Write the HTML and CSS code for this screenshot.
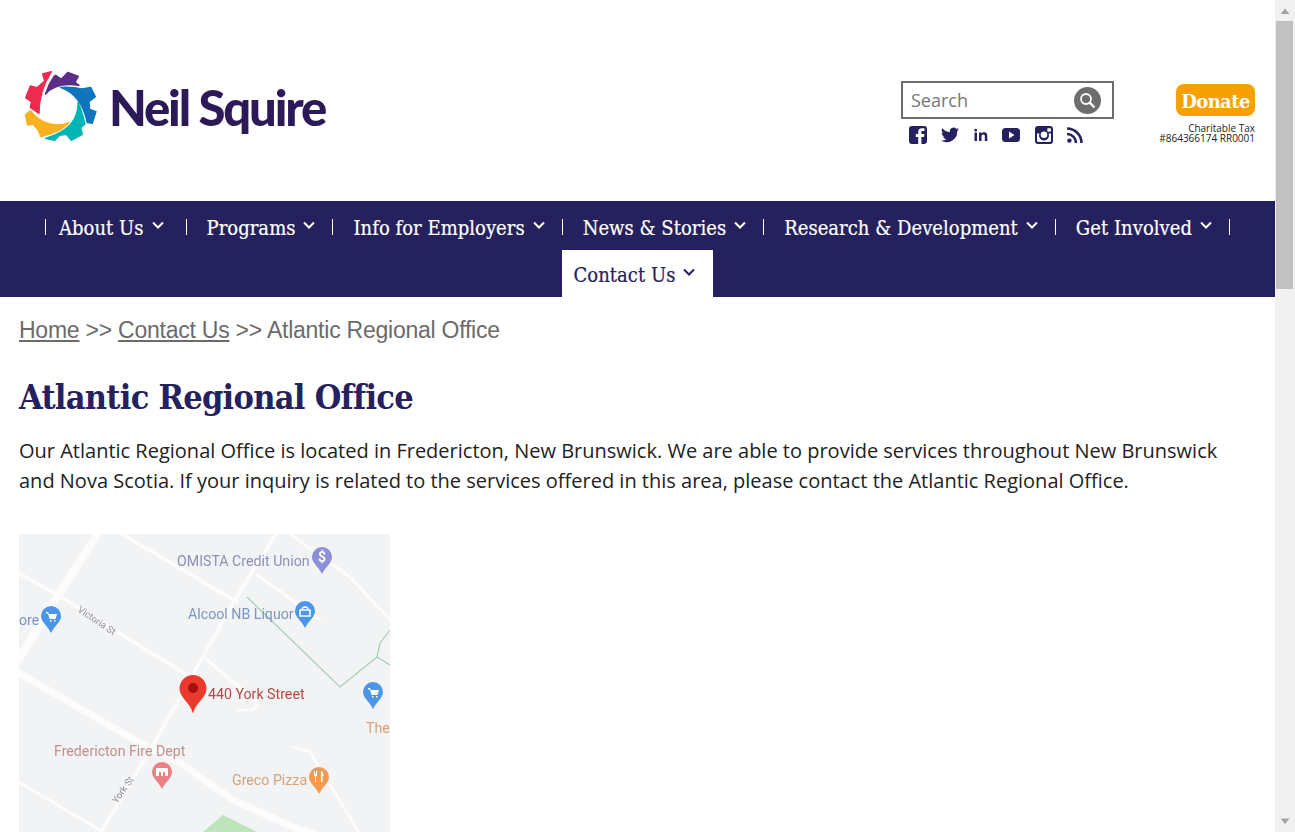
FILE: index.html
```html
<!DOCTYPE html>
<html lang="en">
<head>
<meta charset="utf-8">
<title>Atlantic Regional Office - Neil Squire</title>
<link rel="stylesheet" href="styles.css">
</head>
<body>
<div class="page">
<header class="top">
  <a class="logo" href="#">
    <svg class="gear" width="75" height="73" viewBox="70 60 225 219" stroke-width="4" stroke-linejoin="round">
      <path fill="#f0294f" stroke="#f0294f" d="M155 65 L129 72 L135 93 L112 113 L92 108 L78 143 L95 155 L92 172 L118 190 C118 140 130 105 155 65Z"/>
      <path fill="#5a2d86" stroke="#5a2d86" d="M137 133 C144 110 152 95 164 78 L168 76 L185 87 L205 67 L236 79 L226 97 L238 106 C200 100 160 105 137 133Z"/>
      <path fill="#0f75bc" stroke="#0f75bc" d="M182 112 C205 110 225 112 248 117 L273 112 L287 140 L268 155 L270 178 L289 185 L278 220 L263 218 C255 180 235 130 182 112Z"/>
      <path fill="#00b5b5" stroke="#00b5b5" d="M235 157 C246 180 252 205 256 222 L243 233 L248 253 L215 271 L200 253 L180 256 L165 271 L137 265 C190 250 238 220 235 157Z"/>
      <path fill="#f9b11f" stroke="#f9b11f" d="M208 217 C170 235 120 220 92 182 L77 195 L84 225 L100 222 L115 240 L124 260 C160 250 190 240 208 217Z"/>
    </svg>
    <span class="wordmark">Neil Squire</span>
  </a>
  <div class="tools">
    <form class="search">
      <span class="search-label">Search</span>
      <span class="search-btn">
        <svg width="17" height="17" viewBox="0 0 17 17" fill="none" stroke="#fff" stroke-width="1.8"><circle cx="7" cy="7" r="5"/><path d="M10.7 10.7 L15.5 15.5" stroke-width="2.4"/></svg>
      </span>
    </form>
    <div class="social">
      <svg width="18" height="18" viewBox="0 0 18 18"><path fill="#252160" d="M3 0 H15 a3 3 0 0 1 3 3 V15 a3 3 0 0 1 -3 3 H12.4 V11 H15 L15.400 8 H12.400 V6.300 C12.400 5.400 12.800 5 13.700 5 H15.500 V2.300 H13 C10.500 2.300 9.200 3.800 9.200 6 V8 H6.800 V11 H9.200 V18 H3 a3 3 0 0 1 -3 -3 V3 a3 3 0 0 1 3 -3Z"/></svg>
      <svg width="18" height="16" viewBox="0 0 18 15"><path fill="#252160" d="M18 1.800 a7.300 7.300 0 0 1 -2.100 .6 A3.700 3.700 0 0 0 17.500 .4 a7.400 7.400 0 0 1 -2.300 .9 A3.700 3.700 0 0 0 8.900 4.700 A10.500 10.500 0 0 1 1.300 .8 A3.700 3.700 0 0 0 2.400 5.700 A3.600 3.600 0 0 1 .7 5.300 A3.700 3.700 0 0 0 3.700 8.900 A3.700 3.700 0 0 1 2 9 A3.700 3.700 0 0 0 5.500 11.500 A7.400 7.400 0 0 1 0 13 A10.500 10.500 0 0 0 16.200 3.700 A7.500 7.500 0 0 0 18 1.800Z"/></svg>
      <svg width="14" height="14" viewBox="0 0 14 14"><path fill="#252160" d="M.5 4.500 H3 V13 H.5Z M1.700 .8 a1.400 1.400 0 1 1 0 2.800 a1.400 1.400 0 0 1 0 -2.800Z M5 4.500 H7.400 V5.700 C7.900 4.900 8.900 4.300 10.100 4.300 C12.500 4.300 13.300 5.800 13.300 8 V13 H10.800 V8.500 C10.800 7.400 10.500 6.500 9.400 6.500 C8.200 6.500 7.500 7.300 7.500 8.600 V13 H5Z"/></svg>
      <svg width="18" height="14" viewBox="0 0 18 14"><path fill="#252160" fill-rule="evenodd" d="M3.500 0 H14.500 A3.500 3.500 0 0 1 18 3.500 V10.500 A3.500 3.500 0 0 1 14.500 14 H3.500 A3.500 3.500 0 0 1 0 10.500 V3.500 A3.500 3.500 0 0 1 3.500 0Z M7 3.500 V10.500 L12.500 7Z"/></svg>
      <svg width="18" height="18" viewBox="0 0 18 18"><path fill="#252160" fill-rule="evenodd" d="M3 0 H15 a3 3 0 0 1 3 3 V15 a3 3 0 0 1 -3 3 H3 a3 3 0 0 1 -3 -3 V3 a3 3 0 0 1 3 -3Z M2 7.500 V14.500 a1.500 1.500 0 0 0 1.500 1.500 H14.500 a1.500 1.500 0 0 0 1.500 -1.500 V7.500 H13.600 a5 5 0 1 1 -9.200 0Z M9 5.500 a3.300 3.300 0 1 0 0 6.600 a3.300 3.300 0 0 0 0 -6.600Z M13 2.200 a.7 .7 0 0 0 -.7 .7 V5 a.7 .7 0 0 0 .7 .7 H15.200 a.7 .7 0 0 0 .7 -.7 V2.900 a.7 .7 0 0 0 -.7 -.7Z"/></svg>
      <svg width="16" height="16" viewBox="0 0 16 16" fill="none" stroke="#252160" stroke-width="2.500"><circle cx="2.400" cy="13.600" r="2.200" fill="#252160" stroke="none"/><path d="M0 7 a9 9 0 0 1 9 9"/><path d="M0 1.500 a14.500 14.500 0 0 1 14.500 14.500"/></svg>
    </div>
  </div>
  <div class="give">
    <a class="donate" href="#">Donate</a>
    <p class="tax">Charitable Tax<br>#864366174 RR0001</p>
  </div>
</header>

<nav class="nav">
  <ul class="nav-list">
    <li class="nav-item first"><a href="#">About Us<svg class="chev" width="12" height="8" viewBox="0 0 12 8"><path d="M1 1.500 L6 6.500 L11 1.500"/></svg></a></li>
    <li class="nav-item"><a href="#">Programs<svg class="chev" width="12" height="8" viewBox="0 0 12 8"><path d="M1 1.500 L6 6.500 L11 1.500"/></svg></a></li>
    <li class="nav-item"><a href="#">Info for Employers<svg class="chev" width="12" height="8" viewBox="0 0 12 8"><path d="M1 1.500 L6 6.500 L11 1.500"/></svg></a></li>
    <li class="nav-item"><a href="#">News &amp; Stories<svg class="chev" width="12" height="8" viewBox="0 0 12 8"><path d="M1 1.500 L6 6.500 L11 1.500"/></svg></a></li>
    <li class="nav-item"><a href="#">Research &amp; Development<svg class="chev" width="12" height="8" viewBox="0 0 12 8"><path d="M1 1.500 L6 6.500 L11 1.500"/></svg></a></li>
    <li class="nav-item"><a href="#">Get Involved<svg class="chev" width="12" height="8" viewBox="0 0 12 8"><path d="M1 1.500 L6 6.500 L11 1.500"/></svg></a></li>
    <li class="nav-item current"><a href="#">Contact Us<svg class="chev" width="12" height="8" viewBox="0 0 12 8"><path d="M1 1.500 L6 6.500 L11 1.500"/></svg></a></li>
  </ul>
</nav>

<main class="main">
  <p class="crumbs"><a href="#">Home</a> &gt;&gt; <a href="#">Contact Us</a> &gt;&gt; Atlantic Regional Office</p>
  <h1 class="title">Atlantic Regional Office</h1>
  <p class="intro">Our Atlantic Regional Office is located in Fredericton, New Brunswick. We are able to provide services throughout New Brunswick and Nova Scotia. If your inquiry is related to the services offered in this area, please contact the Atlantic Regional Office.</p>
  <svg class="map" width="371" height="298" viewBox="19 534 371 298" font-family="Roboto, Arial, sans-serif">
    <rect x="19" y="534" width="371" height="298" fill="#f2f3f5"/>
    <g fill="none" stroke="#fcfcfd" stroke-linecap="round" stroke-linejoin="round">
      <path stroke-width="8" d="M100 530 L58 595 L15 665"/>
      <path stroke-width="7" d="M15 671 L140 743 L180 763 L233 800 L293 827 L320 836"/>
      <path stroke-width="3.500" d="M15 571 L58 595 L187 675"/>
      <path stroke-width="3.500" d="M122 534 L237 602"/>
      <path stroke-width="3" d="M257 575 L320 620"/>
      <path stroke-width="3.500" d="M277 532 L233 603 L160 733 L100 834"/>
      <path stroke-width="3" d="M205 658 L258 703 L253 710 L238 710"/>
      <path stroke-width="3" d="M290 534 L350 577 L392 622"/>
      <path stroke-width="3" d="M17 781 L100 830"/>
      <path stroke-width="3" d="M293 747 L310 752 L360 834"/>
    </g>
    <path fill="none" stroke="#a9cdb0" stroke-width="1.200" d="M247 597 L340 687 L377 657 L390 665 M377 657 L380 643 L390 630"/>
    <path fill="#bfe3bd" d="M203 832 L223 815 L257 832Z"/>
    <g font-size="14.200">
      <text x="177" y="566" fill="#8b90b8">OMISTA Credit Union</text>
      <text x="188" y="619" fill="#7a97c0">Alcool NB Liquor</text>
      <text x="19" y="625" fill="#7a97c0">ore</text>
      <text x="208" y="699" fill="#b84a44">440 York Street</text>
      <text x="54" y="756" fill="#c78d8e">Fredericton Fire Dept</text>
      <text x="232" y="785" fill="#d6a27a">Greco Pizza</text>
      <text x="366" y="733" fill="#d6a27a">The</text>
    </g>
    <text font-size="9.500" fill="#8d9196" transform="translate(77 611) rotate(34)">Victoria St</text>
    <text font-size="9.500" fill="#8d9196" transform="translate(117 804) rotate(-55)">York St</text>
    <path fill="#8d8fd8" d="M322 547 a10 10 0 0 1 10 10 c0 6 -6 9 -10 17 c-4 -8 -10 -11 -10 -17 a10 10 0 0 1 10 -10Z"/>
    <path fill="#4b96e6" d="M305 601 a10 10 0 0 1 10 10 c0 6 -6 9 -10 17 c-4 -8 -10 -11 -10 -17 a10 10 0 0 1 10 -10Z"/>
    <path fill="#4b96e6" d="M51 606 a10 10 0 0 1 10 10 c0 6 -6 9 -10 17 c-4 -8 -10 -11 -10 -17 a10 10 0 0 1 10 -10Z"/>
    <path fill="#4b96e6" d="M373 682 a10 10 0 0 1 10 10 c0 6 -6 9 -10 17 c-4 -8 -10 -11 -10 -17 a10 10 0 0 1 10 -10Z"/>
    <path fill="#ea7f84" d="M162 762 a10 10 0 0 1 10 10 c0 6 -6 9 -10 17 c-4 -8 -10 -11 -10 -17 a10 10 0 0 1 10 -10Z"/>
    <path fill="#f29a52" d="M319 767 a10 10 0 0 1 10 10 c0 6 -6 9 -10 17 c-4 -8 -10 -11 -10 -17 a10 10 0 0 1 10 -10Z"/>
    <text x="322" y="562" font-size="14" font-weight="700" fill="#fff" text-anchor="middle">$</text>
    <path fill="none" stroke="#fff" stroke-width="1.500" d="M300 610 H310 V616 H300Z M302 610 a3 3 0 0 1 6 0"/>
    <path fill="#fff" d="M46 612 H48 L49 614 H57 L55.500 619 H49.500 L48 613.500 H46Z M50 620 h1.500 v1.500 h-1.500Z M54 620 h1.500 v1.500 h-1.500Z"/>
    <path fill="#fff" d="M368 688 H370 L371 690 H379 L377.500 695 H371.500 L370 689.500 H368Z M372 696 h1.500 v1.500 h-1.500Z M376 696 h1.500 v1.500 h-1.500Z"/>
    <path fill="#fff" d="M156 768 H168 V776 H165 V772 H163 V776 H161 V772 H159 V776 H156Z"/>
    <path fill="#fff" d="M314 771 h1 v3 h1 v-3 h1 v5 h-1 v6 h-1 v-6 h-1Z M321 771 c2 0 2.500 3 2.500 5 h-1 v6 h-1.500Z"/>
    <path fill="#ea3a2d" d="M193 675 a13.500 13.500 0 0 1 13.500 13.500 c0 9 -10 13 -13.500 25 c-3.500 -12 -13.500 -16 -13.500 -25 a13.500 13.500 0 0 1 13.500 -13.500Z"/>
    <circle cx="193" cy="688" r="5" fill="#a3120f"/>
  </svg>
</main>
</div>
<div class="scrollbar" aria-hidden="true">
  <svg class="arrow" width="20" height="20" viewBox="0 0 20 20"><path d="M5.500 14 L10 8.500 L14.500 14Z"/></svg>
  <div class="track"><div class="thumb"></div></div>
  <svg class="arrow" width="20" height="20" viewBox="0 0 20 20"><path d="M5.500 6.500 L10 12 L14.500 6.500Z"/></svg>
</div>
</body>
</html>
```
FILE: styles.css
```css
* { box-sizing: border-box; }
html, body { overflow: hidden; }
body { margin: 0; background: #fff; height: 100vh; font-family: "Open Sans", sans-serif; color: #222; }
a { color: inherit; }
.page { margin-right: 20px; }

.scrollbar { position: fixed; top: 0; right: 0; width: 20px; height: 100vh; display: flex; flex-direction: column; background: #f1f1f1; }
.arrow { display: block; flex: none; fill: #a3a3a3; }
.track { flex: 1; }
.thumb { height: 268px; margin: 1px 2px 0 1px; background: #c1c1c1; }

.top { display: flex; align-items: flex-start; height: 201px; padding: 70px 20px 0 23px; }
.logo { display: flex; align-items: center; gap: 11px; text-decoration: none; margin-right: auto; height: 73px; }
.wordmark { font-family: "Lato", sans-serif; font-weight: 900; font-size: 49px; letter-spacing: -2.15px; color: #2b1a57; }
.tools { display: flex; flex-direction: column; margin-top: 11px; width: 213px; margin-right: 61px; }
.search { display: flex; align-items: center; justify-content: space-between; height: 38px; border: 2px solid #6d6d6d; padding: 0 11px 0 8px; }
.search-label { font-size: 18px; color: #777; }
.search-btn { display: flex; align-items: center; justify-content: center; width: 27px; height: 27px; border-radius: 50%; background: #6d6d6d; }
.social { display: flex; align-items: center; justify-content: space-between; width: 174px; margin: 6px 0 0 8px; height: 20px; }
.give { display: flex; flex-direction: column; align-items: flex-end; margin-top: 14px; width: 80px; }
.donate { display: flex; align-items: center; justify-content: center; width: 79px; height: 32px; padding-top: 2px; border-radius: 8px; background: #f6a100; color: #fff; text-decoration: none; font-family: "DejaVu Serif", serif; font-weight: 700; font-size: 18px; letter-spacing: -.6px; }
.tax { margin: 7px 0 0; width: 110px; flex: none; font-size: 10px; line-height: 10px; text-align: right; color: #222; }

.nav { background: #25215e; height: 96px; }
.nav-list { list-style: none; margin: 0; padding: 2px 0 0; display: flex; flex-wrap: wrap; justify-content: center; }
.nav-item { height: 47px; display: flex; align-items: center; }
.nav-item a { display: flex; align-items: center; gap: 8px; height: 16px; padding: 2px 17px 0 20px; border-right: 1px solid #fff; color: #fff; text-decoration: none; font-family: "DejaVu Serif Condensed", "DejaVu Serif", serif; font-size: 20px; letter-spacing: .03px; line-height: 18px; -webkit-text-stroke: .2px currentColor; }
.nav-item.first a { border-left: 1px solid #fff; padding: 2px 22px 0 13px; }
.nav-item.current { background: #fff; }
.nav-item.current a { color: #25215e; border: 0; padding: 2px 18px 0 12px; }
.chev { flex: none; fill: none; stroke: currentColor; stroke-width: 2; margin-top: -6px; }

.main { padding: 0 19px; }
.crumbs { margin: 0; padding-top: 20px; font-family: "Liberation Sans", sans-serif; font-size: 23px; line-height: 27px; color: #6b6b6b; letter-spacing: -.24px; }
.title { margin: 31px 0 0; font-family: "DejaVu Serif Condensed", "DejaVu Serif", serif; font-weight: 700; font-size: 34px; line-height: 44px; letter-spacing: -.72px; color: #25215e; }
.intro { margin: 17px 0 0; font-size: 20px; line-height: 30px; color: #222; }
.map { display: block; margin-top: 38px; filter: blur(.45px); }
```
